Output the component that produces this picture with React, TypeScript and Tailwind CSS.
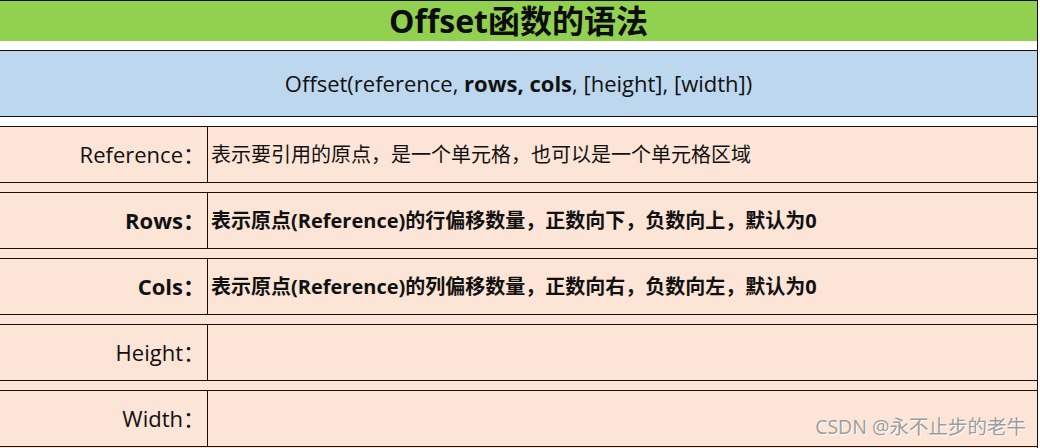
const font = { fontFamily: '"Open Sans", "Noto Sans CJK SC", sans-serif' };

type Row = { label: string; desc: string; bold?: boolean };

const rows: Row[] = [
  { label: "Reference：", desc: "表示要引用的原点，是一个单元格，也可以是一个单元格区域" },
  { label: "Rows：", desc: "表示原点(Reference)的行偏移数量，正数向下，负数向上，默认为0", bold: true },
  { label: "Cols：", desc: "表示原点(Reference)的列偏移数量，正数向右，负数向左，默认为0", bold: true },
  { label: "Height：", desc: "" },
  { label: "Width：", desc: "" },
];

export default function App() {
  return (
    <div className="relative w-[1040px] h-[448px] overflow-hidden bg-white text-[#111]" style={font}>
      <div className="w-[1038px] h-full border-r border-[#1a0d0d] flex flex-col">
        {/* Title */}
        <div className="h-[41px] border-t border-[#1a0d0d] bg-[#92d050] flex items-center justify-center">
          <h1 className="text-[32px] font-bold leading-[40px] text-[#0d0d0d]">Offset函数的语法</h1>
        </div>
        <div className="h-[9px]" />

        {/* Syntax */}
        <div className="h-[67px] border-y border-[#1a0d0d] bg-[#bdd7ee] flex items-center justify-center text-[22px]">
          <span>
            Offset(reference, <b>rows, cols</b>, [height], [width])
          </span>
        </div>
        <div className="h-[9px]" />

        {/* Params */}
        <div className="flex-1 bg-[#fce4d6] flex flex-col gap-[9px]">
          {rows.map((r) => (
            <div key={r.label} className="h-[57px] border-y border-[#1a0d0d] flex">
              <div
                className={`w-[208px] border-r border-[#1a0d0d] flex items-center justify-end pr-[2px] text-[22px] ${
                  r.bold ? "font-bold" : ""
                }`}
              >
                {r.label}
              </div>
              <div className={`flex-1 flex items-center pl-[3px] text-[20px] ${r.bold ? "font-bold" : ""}`}>
                {r.desc}
              </div>
            </div>
          ))}
        </div>
      </div>

      {/* Watermark */}
      <div className="absolute right-[14px] bottom-[7px] text-[19.5px] text-[#9c9c9c] [text-shadow:1px_1px_0_#ffffff]">
        CSDN @永不止步的老牛
      </div>
    </div>
  );
}
